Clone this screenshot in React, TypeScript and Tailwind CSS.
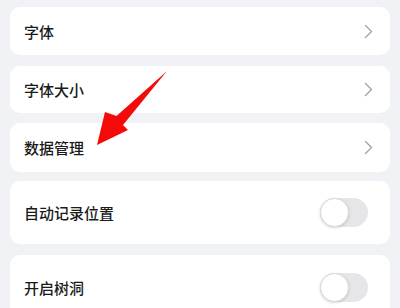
import React from 'react';

function Chevron() {
  return (
    <svg width="9" height="15" viewBox="0 0 9 15" className="shrink-0">
      <path d="M1.5 1.5 L7.5 7.5 L1.5 13.5" fill="none" stroke="#a3a3a3" strokeWidth="1.4" strokeLinecap="round" strokeLinejoin="round" />
    </svg>
  );
}

function Toggle() {
  return (
    <div className="relative w-[48px] h-[29px] rounded-full bg-[#e6e6e8] shrink-0">
      <div className="absolute left-0 top-0 w-[29px] h-[29px] rounded-full bg-white border border-[#d9d9dc] shadow-[0_1px_3px_rgba(0,0,0,0.15)]" />
    </div>
  );
}

function Row({ label, right, h, mt }: { label: string; right: 'chevron' | 'toggle'; h: string; mt: string }) {
  return (
    <div className={`${h} ${mt} flex items-center justify-between bg-white rounded-[10px] pl-[14px] ${right === 'chevron' ? 'pr-[17px]' : 'pr-[22px]'}`}>
      <span className="text-[15px] font-medium text-[#1a1a1a] leading-none">{label}</span>
      {right === 'chevron' ? <Chevron /> : <Toggle />}
    </div>
  );
}

export default function App() {
  return (
    <div
      className="relative w-[400px] h-[308px] overflow-hidden bg-[#f1f2f6] px-[10px] pt-[7px]"
      style={{ fontFamily: '"Noto Sans CJK SC", "Noto Sans", sans-serif' }}
    >
      <Row label="字体" right="chevron" h="h-[48px]" mt="mt-0" />
      <Row label="字体大小" right="chevron" h="h-[47px]" mt="mt-[11px]" />
      <Row label="数据管理" right="chevron" h="h-[49px]" mt="mt-[10px]" />
      <Row label="自动记录位置" right="toggle" h="h-[63px]" mt="mt-[9px]" />
      <Row label="开启树洞" right="toggle" h="h-[64px]" mt="mt-[11px]" />

      <svg className="absolute left-0 top-0 pointer-events-none" width="400" height="308" viewBox="0 0 400 308">
        <polygon points="167,71 123,125 128,130 97,145 105,112 116.5,116" fill="#f50a0a" />
      </svg>
    </div>
  );
}
